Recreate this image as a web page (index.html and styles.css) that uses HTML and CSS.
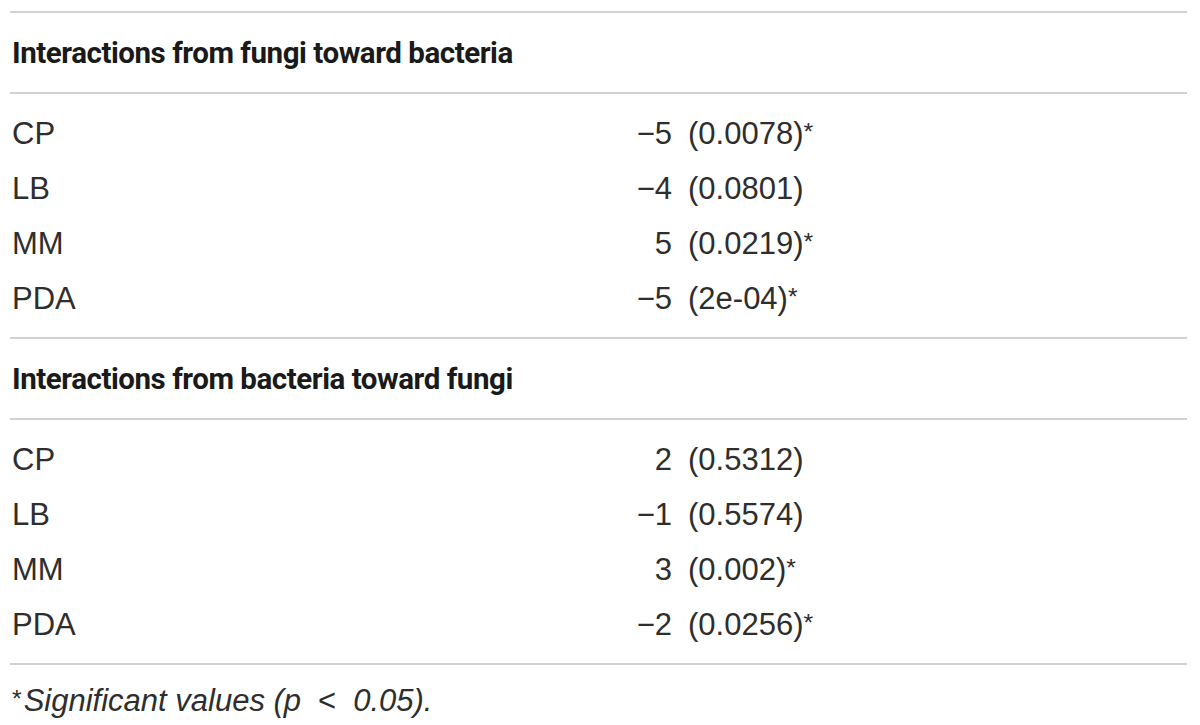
FILE: index.html
```html
<!DOCTYPE html>
<html>
<head>
<meta charset="utf-8">
<link rel="stylesheet" href="styles.css">
</head>
<body>
<div class="table">
  <section class="group">
    <div class="head">Interactions from fungi toward bacteria</div>
    <div class="rows">
      <div class="row"><span class="lbl">CP</span><span class="val"><span class="num">−5</span><span class="p">(0.0078)<span class="star">*</span></span></span></div>
      <div class="row"><span class="lbl">LB</span><span class="val"><span class="num">−4</span><span class="p">(0.0801)</span></span></div>
      <div class="row"><span class="lbl">MM</span><span class="val"><span class="num">5</span><span class="p">(0.0219)<span class="star">*</span></span></span></div>
      <div class="row"><span class="lbl">PDA</span><span class="val"><span class="num">−5</span><span class="p">(2e-04)<span class="star">*</span></span></span></div>
    </div>
  </section>
  <section class="group">
    <div class="head">Interactions from bacteria toward fungi</div>
    <div class="rows">
      <div class="row"><span class="lbl">CP</span><span class="val"><span class="num">2</span><span class="p">(0.5312)</span></span></div>
      <div class="row"><span class="lbl">LB</span><span class="val"><span class="num">−1</span><span class="p">(0.5574)</span></span></div>
      <div class="row"><span class="lbl">MM</span><span class="val"><span class="num">3</span><span class="p">(0.002)<span class="star">*</span></span></span></div>
      <div class="row"><span class="lbl">PDA</span><span class="val"><span class="num">−2</span><span class="p">(0.0256)<span class="star">*</span></span></span></div>
    </div>
  </section>
  <div class="note"><span class="nstar">*</span><em>Significant values (p<span class="lt">&lt;</span>0.05).</em></div>
</div>
</body>
</html>
```
FILE: styles.css
```css
html, body {
  margin: 0;
  padding: 0;
  background: #ffffff;
}
body {
  font-family: "Liberation Sans", Arial, sans-serif;
  color: #2e2e2e;
}
.table {
  margin: 11px 0 0 10px;
  width: 1177px;
}
.group {
  border-top: 2px solid #d2d2d2;
}
.head {
  height: 81px;
  box-sizing: border-box;
  padding: 23px 0 0 2px;
  font-family: Roboto, "Liberation Sans", sans-serif;
  font-size: 29.5px;
  letter-spacing: -0.45px;
  font-weight: bold;
  color: #1a1a1a;
  border-bottom: 2px solid #d2d2d2;
  line-height: 34px;
}
.rows {
  padding: 11px 0 12px;
}
.row {
  height: 55px;
  display: flex;
  align-items: center;
  font-size: 31px;
  padding-top: 2px;
  box-sizing: border-box;
}
.lbl {
  width: 610px;
  padding-left: 2px;
}
.val {
  display: flex;
}
.num {
  width: 50px;
  text-align: right;
}
.p {
  margin-left: 16px;
}
.star {
  font-size: 0.8em;
  vertical-align: 0.15em;
  line-height: 0;
}
.note {
  border-top: 2px solid #d2d2d2;
  padding: 18px 0 0 2px;
  font-size: 31px;
  color: #2e2e2e;
}
.nstar {
  font-size: 0.8em;
  vertical-align: 0.15em;
  margin-right: 2px;
}
.note em {
  font-style: italic;
}
.lt {
  font-style: normal;
  margin: 0 17px;
}
```
